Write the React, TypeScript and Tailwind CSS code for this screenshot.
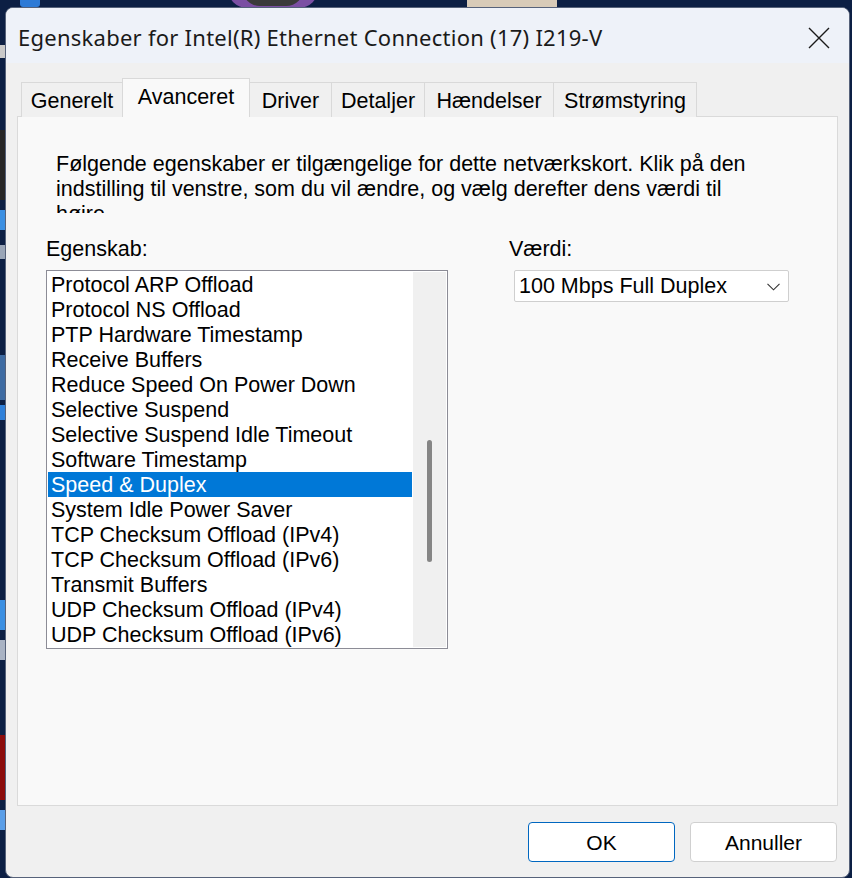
import React from 'react'

const tabs = [
  { label: 'Generelt', width: 'w-[102px]' },
  { label: 'Avanceret', width: 'w-[128px]', active: true },
  { label: 'Driver', width: 'w-[83px]' },
  { label: 'Detaljer', width: 'w-[94px]' },
  { label: 'Hændelser', width: 'w-[130px]' },
  { label: 'Strømstyring', width: 'w-[144px]' },
]

const properties = [
  'Protocol ARP Offload',
  'Protocol NS Offload',
  'PTP Hardware Timestamp',
  'Receive Buffers',
  'Reduce Speed On Power Down',
  'Selective Suspend',
  'Selective Suspend Idle Timeout',
  'Software Timestamp',
  'Speed & Duplex',
  'System Idle Power Saver',
  'TCP Checksum Offload (IPv4)',
  'TCP Checksum Offload (IPv6)',
  'Transmit Buffers',
  'UDP Checksum Offload (IPv4)',
  'UDP Checksum Offload (IPv6)',
]

const selected = 'Speed & Duplex'

const App: React.FC = () => {
  return (
    <div className="relative w-[852px] h-[878px] overflow-hidden bg-[#0c1f44] font-['Liberation_Sans',Arial,sans-serif] text-black">
      {/* desktop peeking out behind the dialog */}
      <div className="absolute left-[20px] top-0 w-[20px] h-[7px] rounded-b-[3px] bg-[#2d7ad6]" />
      <div className="absolute left-[228px] top-[-30px] w-[90px] h-[38px] rounded-full bg-[#7b4fa3]" />
      <div className="absolute left-[242px] top-[-30px] w-[62px] h-[36px] rounded-full bg-[#3a3a3a]" />
      <div className="absolute left-[467px] top-0 w-[90px] h-[7px] bg-[#d8cbb8]" />
      <div className="absolute left-0 top-[45px] w-[5px] h-[13px] bg-[#c9c9c9]" />
      <div className="absolute left-0 top-[130px] w-[5px] h-[70px] bg-[#262626]" />
      <div className="absolute left-0 top-[210px] w-[5px] h-[20px] bg-[#3b8fe2]" />
      <div className="absolute left-0 top-[245px] w-[5px] h-[14px] bg-[#9aa6b8]" />
      <div className="absolute left-0 top-[355px] w-[5px] h-[45px] bg-[#3e6ba2]" />
      <div className="absolute left-0 top-[405px] w-[5px] h-[15px] bg-[#2f80d9]" />
      <div className="absolute left-0 top-[600px] w-[5px] h-[30px] bg-[#3b8fe2]" />
      <div className="absolute left-0 top-[640px] w-[5px] h-[20px] bg-[#a9b3c4]" />
      <div className="absolute left-0 top-[735px] w-[5px] h-[65px] bg-[#8c0c0c]" />
      <div className="absolute left-0 top-[810px] w-[5px] h-[20px] bg-[#5a9ee8]" />

      {/* dialog window */}
      <div className="relative z-10 ml-[5px] mt-[7px] w-[845px] h-[871px] rounded-[8px] overflow-hidden border border-[#56627a] bg-[#f0f0f0] flex flex-col">
        {/* title bar */}
        <div className="h-[55px] shrink-0 bg-[#eef2f9] flex items-center justify-between pl-[12px] pr-[19px] pt-[4px]">
          <span className="font-['Noto_Sans',sans-serif] text-[22px] text-[#1a1a1a] tracking-[0.25px]">
            Egenskaber for Intel(R) Ethernet Connection (17) I219-V
          </span>
          <svg width="22" height="22" viewBox="0 0 22 22" className="text-[#1a1a1a]">
            <path d="M1 1 L21 21 M21 1 L1 21" stroke="currentColor" strokeWidth="1.4" fill="none" />
          </svg>
        </div>

        <div className="flex-1 flex flex-col px-[11px] text-[21.5px] leading-[25px]">
          {/* tabs */}
          <div className="h-[54px] shrink-0 flex items-end pl-[4px] relative z-10 -mb-px">
            {tabs.map((tab, i) => (
              <div
                key={tab.label}
                className={
                  tab.active
                    ? `${tab.width} h-[39px] ${i > 0 ? '-ml-px' : ''} relative z-10 bg-[#f9f9f9] border border-b-0 border-[#d9d9d9] flex items-start justify-center pt-[6px]`
                    : `${tab.width} h-[35px] ${i > 0 ? '-ml-px' : ''} bg-[#f0f0f0] border border-b-0 border-[#d9d9d9] flex items-start justify-center pt-[6px]`
                }
              >
                {tab.label}
              </div>
            ))}
          </div>

          {/* tab panel */}
          <div className="h-[690px] w-[821px] shrink-0 bg-[#f9f9f9] border border-[#dadada]">
            <div className="ml-[38px] mt-[35px] h-[61px] overflow-hidden">
              Følgende egenskaber er tilgængelige for dette netværkskort. Klik på den
              <br />
              indstilling til venstre, som du vil ændre, og vælg derefter dens værdi til
              <br />
              højre.
            </div>

            <div className="flex mt-[23px] pl-[28px]">
              {/* property list */}
              <div className="flex flex-col">
                <div className="h-[25px] pt-[1px] leading-[24px]">Egenskab:</div>
                <div className="mt-[9px] w-[402px] h-[379px] border border-[#8c8c96] bg-white flex">
                  <div className="w-[366px] pt-[1px] overflow-hidden">
                    {properties.map((p) =>
                      p === selected ? (
                        <div key={p} className="ml-[1px] w-[364px] h-[25px] pt-[2px] leading-[23px] pl-[3px] bg-[#0078d7] text-white whitespace-nowrap">
                          {p}
                        </div>
                      ) : (
                        <div key={p} className="h-[25px] pt-[2px] leading-[23px] pl-[4px] whitespace-nowrap">
                          {p}
                        </div>
                      )
                    )}
                  </div>
                  <div className="flex-1 my-px mr-px bg-[#f0f0f0] flex justify-center pt-[168px]">
                    <div className="w-[5px] h-[122px] rounded-full bg-[#858585]" />
                  </div>
                </div>
              </div>

              {/* value */}
              <div className="ml-[61px] flex flex-col">
                <div className="h-[25px] pt-[1px] leading-[24px]">Værdi:</div>
                <div className="mt-[9px] ml-[5px] w-[275px] h-[32px] bg-white border border-[#cfcfcf] rounded-[2px] flex items-center justify-between pl-[4px] pr-[8px] pt-[1px]">
                  <span>100 Mbps Full Duplex</span>
                  <svg width="13" height="8" viewBox="0 0 13 8" className="text-[#333]">
                    <path d="M0.5 0.8 L6.5 6.8 L12.5 0.8" stroke="currentColor" strokeWidth="1.1" fill="none" />
                  </svg>
                </div>
              </div>
            </div>
          </div>

          {/* buttons */}
          <div className="flex justify-end gap-[15px] mt-[16px] pr-[1px]">
            <button className="w-[147px] h-[40px] rounded-[4px] bg-white border border-[#0067c0] text-[21px]">
              OK
            </button>
            <button className="w-[147px] h-[40px] rounded-[4px] bg-white border border-[#d0d0d0] text-[21px]">
              Annuller
            </button>
          </div>
        </div>
      </div>
    </div>
  )
}

export default App
